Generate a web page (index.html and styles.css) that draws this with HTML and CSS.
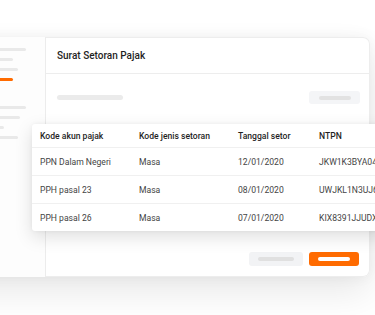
FILE: index.html
```html
<!DOCTYPE html>
<html lang="en">
<head>
  <meta charset="UTF-8">
  <title>Surat Setoran Pajak</title>
  <meta name="viewport" content="width=device-width, initial-scale=1.0">
  <link rel="stylesheet" href="styles.css">
</head>
<body>

  <div class="window">

    <!-- Sidebar placeholder -->
    <div class="sidebar">
      <div class="nav-group">
        <span class="nav-line w46"></span>
        <span class="nav-line w33"></span>
        <span class="nav-line w38"></span>
        <span class="nav-line w33 active"></span>
      </div>
      <div class="nav-group">
        <span class="nav-line w46"></span>
        <span class="nav-line w40"></span>
        <span class="nav-line w24"></span>
        <span class="nav-line w38"></span>
      </div>
    </div>

    <div class="main">
      <div class="main-header">Surat Setoran Pajak</div>

      <div class="toolbar">
        <span class="skeleton-bar"></span>
        <span class="btn btn-light"><span class="btn-label"></span></span>
      </div>

      <div class="footer">
        <span class="btn btn-grey"><span class="btn-label"></span></span>
        <span class="btn btn-orange"><span class="btn-label"></span></span>
      </div>
    </div>

    <!-- Floating table card -->
    <table class="tax-table">
      <thead>
        <tr>
          <th>Kode akun pajak</th>
          <th>Kode jenis setoran</th>
          <th>Tanggal setor</th>
          <th>NTPN</th>
        </tr>
      </thead>
      <tbody>
        <tr>
          <td>PPN Dalam Negeri</td>
          <td>Masa</td>
          <td>12/01/2020</td>
          <td>JKW1K3BYA04</td>
        </tr>
        <tr>
          <td>PPH pasal 23</td>
          <td>Masa</td>
          <td>08/01/2020</td>
          <td>UWJKL1N3UJ6</td>
        </tr>
        <tr>
          <td>PPH pasal 26</td>
          <td>Masa</td>
          <td>07/01/2020</td>
          <td>KIX8391JJUDX</td>
        </tr>
      </tbody>
    </table>

  </div>

</body>
</html>
```

FILE: styles.css
```css
body {
  font-family: 'Roboto', 'Inter', sans-serif;
  background: #fff;
  color: #222;
  margin: 0;
  width: 375px;
  height: 315px;
  overflow: hidden;
}

.window {
  position: relative;
  display: flex;
  width: 410px;
  height: 240px;
  margin: 37px 0 0 -40px;
  border-radius: 0 7px 7px 0;
  background: #fff;
  box-shadow: 0 16px 36px rgba(0, 0, 0, 0.09), 0 0 14px rgba(0, 0, 0, 0.05);
}

/* Sidebar */
.sidebar {
  width: 86px;
  flex-shrink: 0;
  border-right: 1px solid #ececec;
  background: #fdfdfd;
  padding: 11px 0 0 20px;
  box-sizing: border-box;
  display: flex;
  flex-direction: column;
  gap: 25px;
}

.nav-group {
  display: flex;
  flex-direction: column;
  gap: 7px;
}

.nav-line {
  display: block;
  height: 3px;
  border-radius: 2px;
  background: #e9e9e9;
}

.nav-line.active {
  background: #ff6b00;
}

.w24 { width: 24px; }
.w33 { width: 33px; }
.w38 { width: 38px; }
.w40 { width: 40px; }
.w46 { width: 46px; }

/* Main area */
.main {
  flex: 1;
  display: flex;
  flex-direction: column;
  border: 1px solid #ededed;
  border-left: none;
  border-radius: 0 7px 7px 0;
}

.main-header {
  height: 35px;
  display: flex;
  align-items: center;
  padding-left: 11px;
  font-size: 10px;
  font-weight: 500;
  color: #1f1f1f;
  border-bottom: 1px solid #ededed;
}

.toolbar {
  display: flex;
  align-items: center;
  justify-content: space-between;
  padding: 17px 9px 0 11px;
}

.skeleton-bar {
  width: 66px;
  height: 5px;
  border-radius: 3px;
  background: #ebebeb;
}

.btn {
  display: flex;
  align-items: center;
  justify-content: center;
  border-radius: 3px;
}

.btn-label {
  width: 32px;
  height: 4px;
  border-radius: 2px;
}

.btn-light {
  width: 51px;
  height: 13px;
  background: #f4f5f7;
}

.btn-light .btn-label {
  background: #e2e2e2;
}

.footer {
  margin-top: auto;
  display: flex;
  justify-content: flex-end;
  gap: 6px;
  padding: 0 10px 10px 0;
}

.btn-grey {
  width: 54px;
  height: 14px;
  background: #f2f3f5;
}

.btn-grey .btn-label {
  width: 36px;
  background: #e0e0e0;
}

.btn-orange {
  width: 50px;
  height: 14px;
  background: #ff6b00;
}

.btn-orange .btn-label {
  background: #fff;
}

/* Floating table */
.tax-table {
  position: absolute;
  left: 72px;
  top: 87px;
  width: 390px;
  border-collapse: collapse;
  background: #fff;
  border-radius: 3px;
  box-shadow: 0 6px 18px rgba(0, 0, 0, 0.13), 0 0 4px rgba(0, 0, 0, 0.05);
  font-size: 8.6px;
  text-align: left;
}

.tax-table th,
.tax-table td {
  padding: 0;
  white-space: nowrap;
}

.tax-table th:first-child,
.tax-table td:first-child {
  padding-left: 8px;
  width: 99px;
}

.tax-table th:nth-child(2),
.tax-table td:nth-child(2) {
  width: 99px;
}

.tax-table th:nth-child(3),
.tax-table td:nth-child(3) {
  width: 81px;
}

.tax-table th {
  height: 23px;
  font-weight: 500;
  color: #1f1f1f;
}

.tax-table td {
  height: 27px;
  color: #444;
  border-top: 1px solid #f0f0f0;
}
```
